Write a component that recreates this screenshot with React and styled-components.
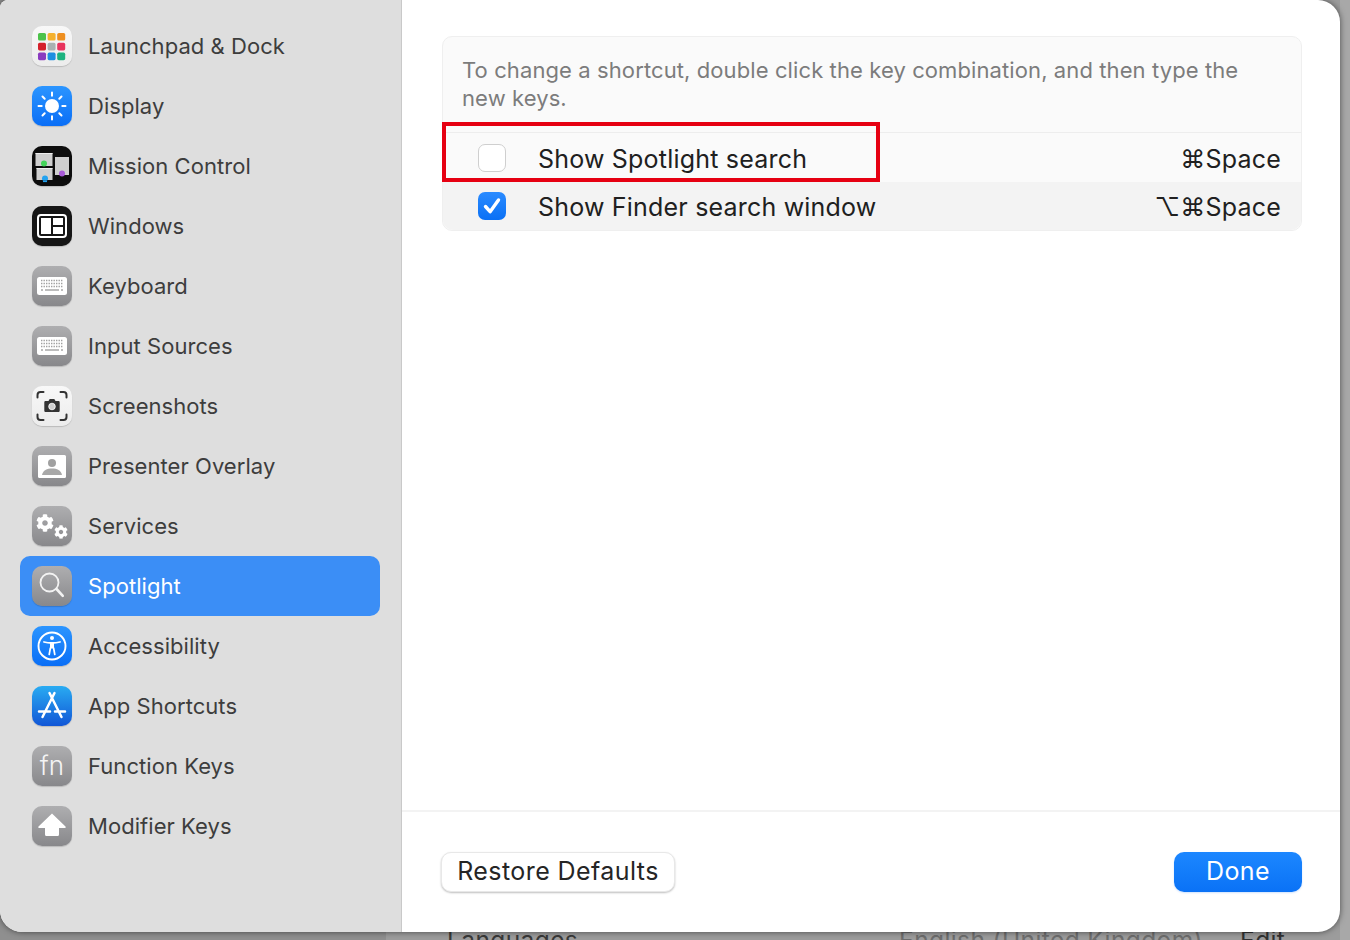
import React from "react";
import styled, { createGlobalStyle } from "styled-components";
import { FaCog } from "react-icons/fa";

const Global = createGlobalStyle`
  html, body { margin: 0; padding: 0; background: #9b9b9b; }
  body { font-family: Inter, "Noto Sans", "DejaVu Sans", sans-serif; -webkit-font-smoothing: antialiased; }
`;

const Desktop = styled.div`
  position: relative;
  width: 1350px;
  height: 940px;
  overflow: hidden;
  background: linear-gradient(90deg, #8f8f8f 0 386px, #9c9c9c 386px 1340px, #a8a8a8 1340px);
`;

const Backdrop = styled.div`
  position: absolute;
  left: 0;
  right: 0;
  top: 925px;
  height: 30px;
  font-size: 24.5px;
  line-height: 30px;
  letter-spacing: 0.4px;
`;

const BackdropText = styled.span`
  position: absolute;
  top: 0;
  left: ${(p) => p.$x}px;
  color: ${(p) => p.$color};
`;

const Window = styled.div`
  position: relative;
  display: flex;
  width: 1340px;
  height: 932px;
  border-radius: 8px 22px 22px 22px;
  overflow: hidden;
  background: #fff;
  box-shadow: 0 0 6px rgba(0, 0, 0, 0.55);
`;

const Sidebar = styled.nav`
  box-sizing: border-box;
  width: 402px;
  flex: none;
  display: flex;
  flex-direction: column;
  padding: 16px 21px 0 20px;
  background: #dedede;
  border-right: 1px solid #c9c9c9;
`;

const NavRow = styled.div`
  display: flex;
  align-items: center;
  gap: 16px;
  height: 60px;
  padding-left: 12px;
  border-radius: 10px;
  background: ${(p) => (p.$active ? "#3b8ef6" : "transparent")};
  color: ${(p) => (p.$active ? "#fff" : "#3d3d3d")};
  font-size: 22px;
  letter-spacing: 0.05px;
`;

const tones = {
  white: "linear-gradient(#f8f8f8, #ececec)",
  blue: "linear-gradient(#2b95ff, #0a6ef6)",
  black: "#0d0d0d",
  dark: "#161616",
  gray: "linear-gradient(#aeaeb0, #88888b)",
  store: "linear-gradient(#29abf2, #1156d6)",
};

const Tile = styled.div`
  flex: none;
  display: flex;
  align-items: center;
  justify-content: center;
  width: 40px;
  height: 40px;
  border-radius: 10px;
  background: ${(p) => tones[p.$tone]};
  box-shadow: 0 1px 1px rgba(0, 0, 0, 0.16);
  overflow: hidden;
`;

const FnLabel = styled.span`
  color: #f4f4f4;
  font-size: 26px;
  font-weight: 300;
  line-height: 38px;
`;

const Main = styled.main`
  flex: 1;
  display: flex;
  flex-direction: column;
  min-width: 0;
`;

const Content = styled.div`
  flex: 1;
  padding: 36px 38px 0 40px;
`;

const Card = styled.section`
  position: relative;
  border: 1px solid #efefef;
  border-radius: 10px;
  background: #fafafa;
  overflow: visible;
`;

const Hint = styled.p`
  margin: 0;
  box-sizing: border-box;
  height: 96px;
  padding: 19px 19px 0;
  border-bottom: 1px solid #ededed;
  color: #7c7c7c;
  font-size: 22px;
  line-height: 28px;
  letter-spacing: 0.1px;
`;

const Row = styled.div`
  display: flex;
  align-items: center;
  height: ${(p) => p.$h}px;
  padding: 0 20px 0 35px;
  background: ${(p) => (p.$alt ? "#f3f3f3" : "transparent")};
  border-radius: ${(p) => (p.$alt ? "0 0 10px 10px" : "0")};
  color: #202020;
  font-size: 25px;
  letter-spacing: 0.2px;
`;

const Check = styled.span`
  flex: none;
  display: flex;
  align-items: center;
  justify-content: center;
  box-sizing: border-box;
  width: 28px;
  height: 28px;
  margin-right: 32px;
  border-radius: 7px;
  border: ${(p) => (p.$on ? "none" : "1px solid #cfcfcf")};
  background: ${(p) => (p.$on ? "linear-gradient(#2a8bff, #0a70f5)" : "#fff")};
`;

const RowLabel = styled.span`
  flex: 1;
  padding-top: 2px;
`;

const Keys = styled.span`
  padding-top: 2px;
  font-family: Inter, "DejaVu Sans", sans-serif;
`;

const RedFrame = styled.div`
  position: absolute;
  left: -1px;
  top: 85px;
  width: 438px;
  height: 60px;
  box-sizing: border-box;
  border: 4px solid #e60012;
  pointer-events: none;
`;

const Footer = styled.footer`
  box-sizing: border-box;
  height: 122px;
  display: flex;
  align-items: center;
  justify-content: space-between;
  padding: 0 38px 0 39px;
  border-top: 2px solid #f3f3f3;
`;

const Button = styled.button`
  box-sizing: border-box;
  height: 40px;
  width: ${(p) => p.$w}px;
  padding: 0 0 2px;
  border-radius: 10px;
  font-family: inherit;
  font-size: 25px;
  letter-spacing: 0.42px;
  border: ${(p) => (p.$primary ? "none" : "1px solid #e8e8e8")};
  color: ${(p) => (p.$primary ? "#fff" : "#252525")};
  background: ${(p) => (p.$primary ? "linear-gradient(#1c87ff, #0a72f6)" : "#fff")};
  box-shadow: ${(p) => (p.$primary ? "0 1px 2px rgba(10,110,245,.2)" : "0 1px 2px rgba(0,0,0,.25)")};
`;

const Launchpad = () => {
  const colors = ["#4cc24a", "#f5b12e", "#ee8f20", "#d4212b", "#a9b1b1", "#e8345e", "#8a3bc0", "#1f8fe2", "#1fb380"];
  return (
    <svg width="40" height="40" viewBox="0 0 40 40">
      {colors.map((c, i) => (
        <rect key={c} x={6 + (i % 3) * 9.6} y={7 + Math.floor(i / 3) * 9.8} width="8" height="7.6" rx="1.6" fill={c} />
      ))}
    </svg>
  );
};

const Sun = () => (
  <svg width="40" height="40" viewBox="0 0 40 40">
    <circle cx="20" cy="20" r="7" fill="#fff" />
    <g stroke="#fff" strokeWidth="2" strokeLinecap="round">
      <path d="M20 6.5v3.2M20 30.3v3.2M6.5 20h3.2M30.3 20h3.2M10.5 10.5l2.2 2.2M27.3 27.3l2.2 2.2M29.5 10.5l-2.2 2.2M12.7 27.3l-2.2 2.2" />
    </g>
  </svg>
);

const Mission = () => (
  <svg width="40" height="40" viewBox="0 0 40 40">
    <rect x="3.5" y="7" width="17" height="13" fill="#cfcfcf" />
    <circle cx="12" cy="17.5" r="3" fill="#44d45a" />
    <rect x="3.5" y="7" width="17" height="1" fill="#eee" />
    <rect x="23" y="11" width="14" height="18" fill="#cfcfcf" />
    <circle cx="30" cy="27.5" r="3" fill="#a85ad8" />
    <rect x="4.5" y="22" width="16" height="12" fill="#cfcfcf" />
    <rect x="4.5" y="22" width="16" height="1" fill="#eee" />
    <circle cx="13" cy="32.5" r="3" fill="#22a2f0" />
    <rect x="0" y="34.5" width="40" height="6" fill="#0d0d0d" />
    <rect x="11" y="34.5" width="4" height="1.6" fill="#22a2f0" />
  </svg>
);

const Panes = () => (
  <svg width="40" height="40" viewBox="0 0 40 40">
    <rect x="6" y="9" width="28" height="22" rx="3" fill="none" stroke="#fff" strokeWidth="2" />
    <rect x="9" y="12" width="10" height="16" fill="#fff" />
    <rect x="21" y="12" width="10" height="7" fill="#fff" />
    <rect x="21" y="21" width="10" height="7" fill="#fff" />
  </svg>
);

const KeyboardIcon = () => (
  <svg width="40" height="40" viewBox="0 0 40 40">
    <rect x="5" y="11" width="30" height="18" rx="2.5" fill="#fff" />
    {[14.5, 17.5, 20.5].map((y) => (
      <path key={y} d="M9 0h22" transform={`translate(0 ${y})`} stroke="#a0a0a0" strokeWidth="1.4" strokeDasharray="1.4 1.1" />
    ))}
    <path d="M9 24h2M13 24h14M29 24h2" stroke="#a8a8a8" strokeWidth="1.4" />
  </svg>
);

const ScreenshotIcon = () => (
  <svg width="40" height="40" viewBox="0 0 40 40">
    <g fill="none" stroke="#333" strokeWidth="2" strokeLinecap="round">
      <path d="M5.5 11.5V9a3 3 0 0 1 3-3h3M28.5 6h3a3 3 0 0 1 3 3v2.5M34.5 28.5V31a3 3 0 0 1-3 3h-3M11.5 34H8.5a3 3 0 0 1-3-3v-2.5" />
    </g>
    <path d="M13.5 15h3l1.2-2h4.6l1.2 2h3a1.2 1.2 0 0 1 1.2 1.2v8.6a1.2 1.2 0 0 1-1.2 1.2h-13a1.2 1.2 0 0 1-1.2-1.2v-8.6a1.2 1.2 0 0 1 1.2-1.2z" fill="#333" />
    <circle cx="20" cy="20.5" r="3.3" fill="#cfcfcf" stroke="#fff" strokeWidth="0.8" />
  </svg>
);

const Presenter = () => (
  <svg width="40" height="40" viewBox="0 0 40 40">
    <rect x="6" y="9" width="28" height="23" rx="1.5" fill="#fff" />
    <circle cx="20" cy="17" r="4" fill="#a0a0a0" />
    <path d="M10 29c1-5 5-6.5 10-6.5s9 1.5 10 6.5z" fill="#a8a8a8" />
  </svg>
);

const Gears = () => (
  <svg width="40" height="40" viewBox="0 0 40 40">
    <FaCog x="4" y="8" size="18" color="#fff" />
    <FaCog x="22" y="19" size="14" color="#fff" />
  </svg>
);

const Magnifier = () => (
  <svg width="40" height="40" viewBox="0 0 40 40">
    <circle cx="17.5" cy="16.5" r="9" fill="none" stroke="#f2f2f2" strokeWidth="1.8" />
    <path d="M24.5 23l6.3 6.8" stroke="#f2f2f2" strokeWidth="2.6" strokeLinecap="round" />
  </svg>
);

const AccessIcon = () => (
  <svg width="40" height="40" viewBox="0 0 40 40">
    <circle cx="20" cy="20" r="13.5" fill="none" stroke="#fff" strokeWidth="1.9" />
    <circle cx="20" cy="12" r="2" fill="#fff" />
    <path d="M12 16c3 .8 5.5 1 8 1s5-.2 8-1" fill="none" stroke="#fff" strokeWidth="1.8" strokeLinecap="round" />
    <path d="M20 17v5.5" stroke="#fff" strokeWidth="4" />
    <path d="M18.4 22l-1.2 6.5M21.6 22l1.2 6.5" fill="none" stroke="#fff" strokeWidth="1.7" strokeLinecap="round" />
  </svg>
);

const AppStore = () => (
  <svg width="40" height="40" viewBox="0 0 40 40">
    <g stroke="#fff" strokeWidth="2.5" strokeLinecap="round" fill="none">
      <path d="M22.5 7L10.5 31M17.5 7L29.5 31M7 25.5h11M23 25.5h10" />
    </g>
  </svg>
);

const UpArrow = () => (
  <svg width="40" height="40" viewBox="0 0 40 40">
    <path d="M20 7.5L33.5 20.5a.8.8 0 0 1-.6 1.4H27v6.6a1.5 1.5 0 0 1-1.5 1.5h-11a1.5 1.5 0 0 1-1.5-1.5v-6.6H7.1a.8.8 0 0 1-.6-1.4z" fill="#fff" />
  </svg>
);

const Tick = () => (
  <svg width="22" height="22" viewBox="0 0 22 22">
    <path d="M4.5 11.5l4.6 5.2L17.5 5" fill="none" stroke="#fff" strokeWidth="3.4" strokeLinecap="round" strokeLinejoin="round" />
  </svg>
);

const items = [
  ["Launchpad & Dock", "white", <Launchpad />],
  ["Display", "blue", <Sun />],
  ["Mission Control", "black", <Mission />],
  ["Windows", "dark", <Panes />],
  ["Keyboard", "gray", <KeyboardIcon />],
  ["Input Sources", "gray", <KeyboardIcon />],
  ["Screenshots", "white", <ScreenshotIcon />],
  ["Presenter Overlay", "gray", <Presenter />],
  ["Services", "gray", <Gears />],
  ["Spotlight", "gray", <Magnifier />],
  ["Accessibility", "blue", <AccessIcon />],
  ["App Shortcuts", "store", <AppStore />],
  ["Function Keys", "gray", <FnLabel>fn</FnLabel>],
  ["Modifier Keys", "gray", <UpArrow />],
];

export default function App() {
  return (
    <Desktop>
      <Global />
      <Backdrop>
        <BackdropText $x={447} $color="#3a3a3a">Languages</BackdropText>
        <BackdropText $x={899} $color="#6e6e6e">English (United Kingdom)</BackdropText>
        <BackdropText $x={1240} $color="#333">Edit</BackdropText>
      </Backdrop>
      <Window>
        <Sidebar>
          {items.map(([label, tone, icon]) => (
            <NavRow key={label} $active={label === "Spotlight"}>
              <Tile $tone={tone}>{icon}</Tile>
              {label}
            </NavRow>
          ))}
        </Sidebar>
        <Main>
          <Content>
            <Card>
              <Hint>To change a shortcut, double click the key combination, and then type the new keys.</Hint>
              <Row $h={49}>
                <Check />
                <RowLabel>Show Spotlight search</RowLabel>
                <Keys>⌘Space</Keys>
              </Row>
              <Row $h={48} $alt>
                <Check $on><Tick /></Check>
                <RowLabel>Show Finder search window</RowLabel>
                <Keys>⌥⌘Space</Keys>
              </Row>
              <RedFrame />
            </Card>
          </Content>
          <Footer>
            <Button $w={234}>Restore Defaults</Button>
            <Button $w={128} $primary>Done</Button>
          </Footer>
        </Main>
      </Window>
    </Desktop>
  );
}
